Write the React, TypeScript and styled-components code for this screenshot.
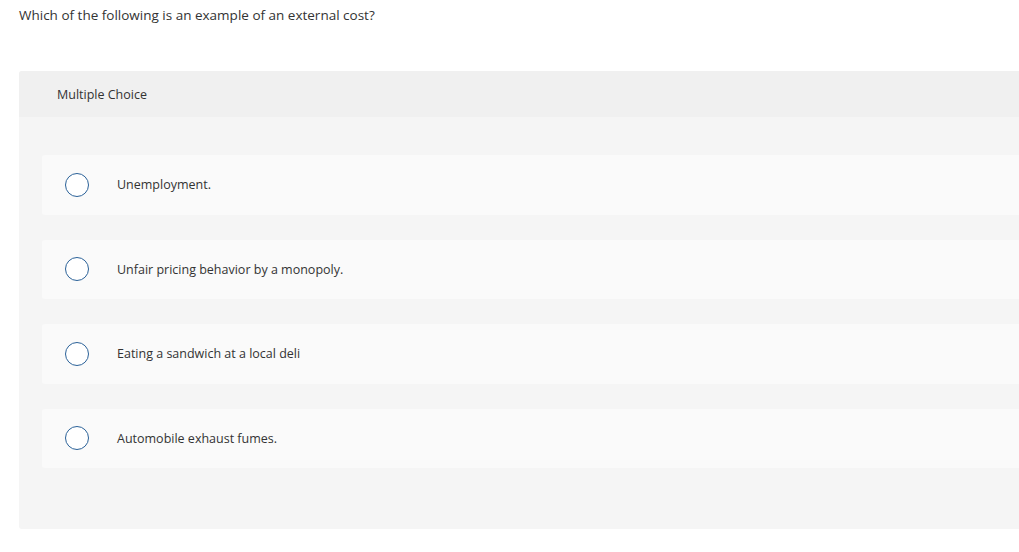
import React from "react";
import styled, { createGlobalStyle } from "styled-components";

const Global = createGlobalStyle`
  html, body { margin: 0; padding: 0; background: #ffffff; overflow: hidden; }
  body { font-family: "Open Sans", Arial, sans-serif; color: #333333; }
`;

const Page = styled.div`
  width: 1019px;
  height: 552px;
  overflow: hidden;
  padding: 6px 0 0 19px;
  box-sizing: border-box;
`;

const Question = styled.p`
  margin: 0;
  font-size: 13.5px;
  line-height: 18px;
  color: #333333;
`;

const Panel = styled.section`
  margin-top: 47px;
  width: 1100px;
  background: #f5f5f5;
  border-radius: 3px;
  padding-bottom: 61px;
`;

const Header = styled.div`
  height: 46px;
  background: #f0f0f0;
  border-radius: 3px 3px 0 0;
  display: flex;
  align-items: center;
  padding-left: 38px;
  font-size: 12.5px;
  color: #333333;
`;

const Options = styled.div`
  display: flex;
  flex-direction: column;
  gap: 25px;
  padding: 38px 0 0 23px;
`;

const Option = styled.label`
  height: 59.5px;
  background: #fafafa;
  border-radius: 3px;
  display: flex;
  align-items: center;
  padding-left: 23px;
  cursor: pointer;
`;

const Radio = styled.span`
  width: 24px;
  height: 24px;
  box-sizing: border-box;
  border: 1.5px solid #2a6198;
  border-radius: 50%;
  background: #ffffff;
  flex-shrink: 0;
`;

const OptionText = styled.span`
  margin-left: 28px;
  font-size: 12.5px;
  color: #333333;
`;

const choices = [
  "Unemployment.",
  "Unfair pricing behavior by a monopoly.",
  "Eating a sandwich at a local deli",
  "Automobile exhaust fumes.",
];

export default function App() {
  return (
    <>
      <Global />
      <Page>
        <Question>Which of the following is an example of an external cost?</Question>
        <Panel>
          <Header>Multiple Choice</Header>
          <Options>
            {choices.map((c) => (
              <Option key={c}>
                <Radio />
                <OptionText>{c}</OptionText>
              </Option>
            ))}
          </Options>
        </Panel>
      </Page>
    </>
  );
}
